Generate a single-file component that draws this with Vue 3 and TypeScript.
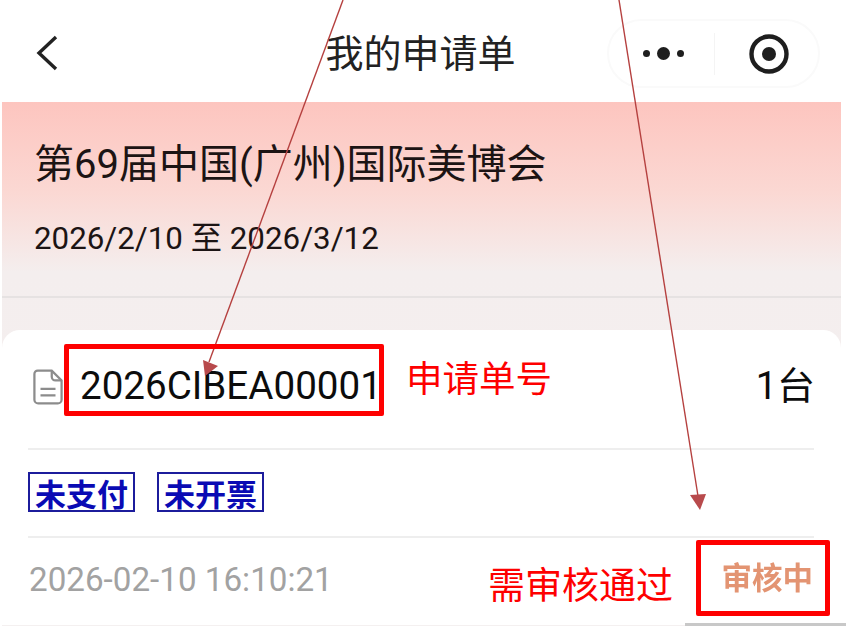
<template>
  <div class="page">
    <header class="nav">
      <svg class="back" width="24" height="40" viewBox="0 0 24 40">
        <path d="M21 3 L4 19 L21 35" fill="none" stroke="#222" stroke-width="3.4" />
      </svg>
      <div class="title">我的申请单</div>
      <div class="capsule">
        <div class="more">
          <i class="dot"></i>
          <i class="dot big"></i>
          <i class="dot"></i>
        </div>
        <div class="sep"></div>
        <svg class="target" width="42" height="42" viewBox="0 0 42 42">
          <circle cx="21" cy="21" r="17.5" fill="none" stroke="#1e1e1e" stroke-width="4.4" />
          <circle cx="21" cy="21" r="7" fill="#1e1e1e" />
        </svg>
      </div>
    </header>

    <section class="panel">
      <div class="event">
        <h1 class="event-name">第69届中国(广州)国际美博会</h1>
        <p class="event-date">2026/2/10 至 2026/3/12</p>
      </div>

      <div class="card">
        <div class="row head">
          <div class="order">
            <svg class="doc" width="30" height="36" viewBox="0 0 32 38">
              <path
                d="M5 1.5 H20 L30.5 12 V32.5 A4 4 0 0 1 26.5 36.5 H5.5 A4 4 0 0 1 1.5 32.5 V5 A3.5 3.5 0 0 1 5 1.5 Z"
                fill="none"
                stroke="#8c8c8c"
                stroke-width="2.4"
              />
              <path d="M20 2 V8 A4 4 0 0 0 24 12 H30" fill="none" stroke="#8c8c8c" stroke-width="2.4" />
              <path d="M8 21 H24 M8 28 H24" stroke="#8c8c8c" stroke-width="2.4" />
            </svg>
            <span class="order-no">2026CIBEA00001</span>
          </div>
          <span class="count">1台</span>
        </div>
        <div class="row tags">
          <span v-for="tag in tags" :key="tag" class="tag">{{ tag }}</span>
        </div>
        <div class="row foot">
          <span class="time">2026-02-10 16:10:21</span>
          <span class="status">审核中</span>
        </div>
      </div>
    </section>

    <div class="foot-line"></div>

    <svg class="arrows" width="846" height="626" viewBox="0 0 846 626">
      <g stroke="#b5403f" stroke-width="1.4" fill="none">
        <path d="M343 0 L209 362" />
        <path d="M619 0 L698 496" />
      </g>
      <g fill="#b84a4c">
        <polygon points="205,376 203,360 218,366" />
        <polygon points="700,510 690,495 706,494" />
      </g>
    </svg>
    <div class="mark mark-no"></div>
    <div class="mark mark-status"></div>
    <div class="note note-no">申请单号</div>
    <div class="note note-status">需审核通过</div>
  </div>
</template>

<script setup lang="ts">
const tags: string[] = ["未支付", "未开票"];
</script>

<style>
html,
body {
  margin: 0;
  background: #fff;
}
</style>

<style scoped>
.page {
  position: relative;
  width: 846px;
  height: 626px;
  overflow: hidden;
  background: #fff;
  font-family: Roboto, "Noto Sans CJK SC", sans-serif;
  color: #1c1414;
}
.nav {
  height: 102px;
  box-sizing: border-box;
  padding: 18px 26px 15px 35px;
  display: grid;
  grid-template-columns: 1fr auto 1fr;
  align-items: center;
}
.back {
  display: block;
}
.title {
  font-size: 38px;
  line-height: 69px;
  margin: 2px 0 0 -14px;
  color: #222;
}
.capsule {
  justify-self: end;
  width: 213px;
  height: 69px;
  box-sizing: border-box;
  border: 2px solid #fafafa;
  border-radius: 35px;
  display: flex;
  align-items: center;
}
.more {
  width: 105px;
  display: flex;
  justify-content: center;
  align-items: center;
  gap: 7px;
  padding-left: 3px;
  box-sizing: border-box;
}
.dot {
  width: 7px;
  height: 7px;
  border-radius: 50%;
  background: #1e1e1e;
}
.dot.big {
  width: 13px;
  height: 13px;
}
.sep {
  width: 1px;
  height: 42px;
  background: #f4f4f4;
}
.target {
  margin-left: 33px;
}
.panel {
  height: 524px;
  margin: 0 5px 0 2px;
  background: linear-gradient(#fdc5bf 0, #fbd8d3 90px, #f4eeee 170px, #f4f0f0 100%);
}
.event {
  height: 196px;
  box-sizing: border-box;
  padding: 33px 0 0 32px;
  border-bottom: 2px solid #e6e2e2;
}
.event-name {
  margin: 0;
  font-size: 40px;
  font-weight: 400;
  line-height: 60px;
}
.event-date {
  margin: 22px 0 0;
  font-size: 31.3px;
  line-height: 44px;
}
.card {
  height: 295px;
  margin-top: 32px;
  padding: 0 27px 0 26px;
  background: #fff;
  border-radius: 18px 18px 0 0;
}
.row {
  display: flex;
  align-items: center;
  justify-content: space-between;
}
.head {
  height: 118px;
  border-bottom: 2px solid #eeeeee;
}
.order {
  display: flex;
  align-items: center;
  gap: 17px;
  padding-left: 5px;
}
.doc {
  margin-top: -4px;
}
.order-no {
  font-size: 38.6px;
  line-height: 48px;
  margin-top: -6px;
  color: #0c0c0c;
}
.count {
  font-size: 38px;
  line-height: 48px;
  margin: -6px -1px 0 0;
  color: #0c0c0c;
}
.tags {
  height: 86px;
  justify-content: flex-start;
  gap: 22px;
  border-bottom: 2px solid #eeeeee;
}
.tag {
  width: 107px;
  height: 40px;
  box-sizing: border-box;
  border: 2px solid #1c1c9c;
  display: flex;
  align-items: center;
  justify-content: center;
  font-size: 31px;
  font-weight: 700;
  color: #0a0ab4;
  margin-top: -2px;
}
.foot {
  height: 86px;
}
.time {
  font-size: 33.2px;
  line-height: 44px;
  margin-top: -3px;
  color: #a2a2a2;
  padding-left: 1px;
}
.status {
  font-size: 30.5px;
  font-weight: 700;
  line-height: 44px;
  margin: -5px 1px 0 0;
  color: #e39472;
  filter: blur(0.5px);
}
.foot-line {
  position: absolute;
  left: 685px;
  right: 0;
  bottom: 0;
  height: 3px;
  background: #c8c8c8;
}
.arrows {
  position: absolute;
  left: 0;
  top: 0;
}
.mark {
  position: absolute;
  box-sizing: border-box;
  border: 5px solid #fe0000;
  border-radius: 2px;
}
.mark-no {
  left: 64px;
  top: 344px;
  width: 320px;
  height: 72px;
}
.mark-status {
  left: 696px;
  top: 540px;
  width: 134px;
  height: 76px;
}
.note {
  position: absolute;
  color: #fe0000;
  line-height: 1.2;
}
.note-no {
  left: 406px;
  top: 358px;
  font-size: 36.5px;
}
.note-status {
  left: 488px;
  top: 565px;
  font-size: 37px;
}
</style>
